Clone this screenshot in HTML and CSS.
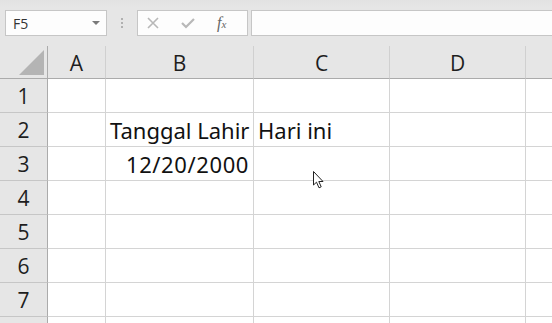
FILE: index.html
```
<!DOCTYPE html>
<html lang="en">
<head>
  <meta charset="UTF-8">
  <title>Sheet</title>
  <link rel="stylesheet" href="styles.css">
</head>
<body>
  <!-- Formula bar -->
  <div class="formula-bar">
    <div class="name-box">
      <span>F5</span>
      <span class="caret"></span>
    </div>
    <div class="grip"><i></i><i></i><i></i></div>
    <div class="fx-buttons">
      <svg class="btn-x" width="12" height="12" viewBox="0 0 12 12"><path d="M1 1 L11 11 M11 1 L1 11" stroke="#b8b8b8" stroke-width="1.6"/></svg>
      <svg class="btn-ok" width="14" height="12" viewBox="0 0 14 12"><path d="M1 6 L5 10 L13 2" stroke="#b8b8b8" stroke-width="2.2" fill="none"/></svg>
      <span class="fx">f<sub>x</sub></span>
    </div>
    <div class="formula-input"></div>
  </div>

  <!-- Grid -->
  <div class="sheet">
    <div class="corner"><span class="tri"></span></div>
    <div class="col-head">A</div>
    <div class="col-head">B</div>
    <div class="col-head">C</div>
    <div class="col-head">D</div>
    <div class="col-head last"></div>

    <div class="row-head">1</div>
    <div class="cell"></div><div class="cell"></div><div class="cell"></div><div class="cell"></div><div class="cell last"></div>

    <div class="row-head">2</div>
    <div class="cell"></div><div class="cell">Tanggal Lahir</div><div class="cell">Hari ini</div><div class="cell"></div><div class="cell last"></div>

    <div class="row-head">3</div>
    <div class="cell"></div><div class="cell num">12/20/2000</div><div class="cell"></div><div class="cell"></div><div class="cell last"></div>

    <div class="row-head">4</div>
    <div class="cell"></div><div class="cell"></div><div class="cell"></div><div class="cell"></div><div class="cell last"></div>

    <div class="row-head">5</div>
    <div class="cell"></div><div class="cell"></div><div class="cell"></div><div class="cell"></div><div class="cell last"></div>

    <div class="row-head">6</div>
    <div class="cell"></div><div class="cell"></div><div class="cell"></div><div class="cell"></div><div class="cell last"></div>

    <div class="row-head">7</div>
    <div class="cell"></div><div class="cell"></div><div class="cell"></div><div class="cell"></div><div class="cell last"></div>

    <div class="row-head"></div>
    <div class="cell"></div><div class="cell"></div><div class="cell"></div><div class="cell"></div><div class="cell last"></div>
  </div>

  <!-- mouse pointer -->
  <svg class="pointer" width="14" height="20" viewBox="0 0 14 20">
    <path d="M1.5 1.5 L1.5 15 L4.5 12.2 L7 17.8 L9.2 16.8 L6.8 11.5 L11 11.5 Z" fill="#fff" stroke="#222" stroke-width="1" stroke-linejoin="round"/>
  </svg>
</body>
</html>
```

FILE: styles.css
```
body {
  margin: 0;
  width: 552px;
  height: 323px;
  overflow: hidden;
  background: #e6e6e6;
  font-family: 'Open Sans', 'Noto Sans', sans-serif;
  color: #1e1e1e;
  position: relative;
}

/* Formula Bar */
.formula-bar {
  height: 46px;
  box-sizing: border-box;
  padding-top: 10px;
  display: flex;
  align-items: flex-start;
  background: linear-gradient(#e2e2e2, #e6e6e6 8px);
}

.name-box {
  margin-left: 5px;
  width: 102px;
  height: 26px;
  box-sizing: border-box;
  border: 1px solid #c6c6c6;
  background: #fdfdfd;
  display: flex;
  align-items: center;
  justify-content: space-between;
  padding: 0 6px 0 7px;
  font-size: 14px;
  color: #333;
}
.caret {
  width: 0;
  height: 0;
  border-left: 4px solid transparent;
  border-right: 4px solid transparent;
  border-top: 4px solid #7a7a7a;
}

.grip {
  width: 30px;
  height: 26px;
  display: flex;
  flex-direction: column;
  align-items: center;
  justify-content: center;
  gap: 2px;
}
.grip i {
  display: block;
  width: 2px;
  height: 2px;
  background: #b0b0b0;
}

.fx-buttons {
  width: 111px;
  height: 26px;
  box-sizing: border-box;
  border: 1px solid #c6c6c6;
  background: #fdfdfd;
  display: flex;
  align-items: center;
  padding-left: 9px;
}
.btn-x { margin-right: 22px; }
.btn-ok { margin-right: 22px; }
.fx {
  font-family: 'Liberation Serif', serif;
  font-style: italic;
  font-size: 16px;
  color: #666;
}
.fx sub { font-size: 11px; vertical-align: 0; }

.formula-input {
  flex: 1;
  margin-left: 3px;
  height: 26px;
  box-sizing: border-box;
  border: 1px solid #c6c6c6;
  border-right: none;
  background: #fdfdfd;
}

/* Sheet grid */
.sheet {
  display: grid;
  grid-template-columns: 48px 58px 148px 136px 136px 1fr;
  grid-template-rows: 33px repeat(8, 34px);
  background: #fff;
}

.corner, .col-head, .row-head, .cell {
  box-sizing: border-box;
}

.corner {
  background: #e6e6e6;
  border-right: 1px solid #ababab;
  border-bottom: 1px solid #ababab;
  position: relative;
}
.tri {
  position: absolute;
  left: 19px;
  top: 4px;
  width: 0;
  height: 0;
  border-left: 25px solid transparent;
  border-bottom: 25px solid #b4b4b4;
}

.col-head {
  background: #e6e6e6;
  border-right: 1px solid #d0d0d0;
  border-bottom: 1px solid #ababab;
  display: flex;
  align-items: center;
  justify-content: center;
  font-size: 21px;
  padding-top: 1px;
}

.row-head {
  background: #e6e6e6;
  border-right: 1px solid #ababab;
  border-bottom: 1px solid #c6c6c6;
  display: flex;
  align-items: center;
  justify-content: center;
  font-size: 21px;
}

.cell {
  border-right: 1px solid #d4d4d4;
  border-bottom: 1px solid #d4d4d4;
  display: flex;
  align-items: center;
  padding: 1px 4px 0;
  font-family: 'Noto Sans', sans-serif;
  font-size: 22px;
  color: #111;
  white-space: nowrap;
}
.cell.num {
  justify-content: flex-end;
  letter-spacing: 0.6px;
}
.last { border-right: none; }

.pointer {
  position: absolute;
  left: 312px;
  top: 170px;
}
```
